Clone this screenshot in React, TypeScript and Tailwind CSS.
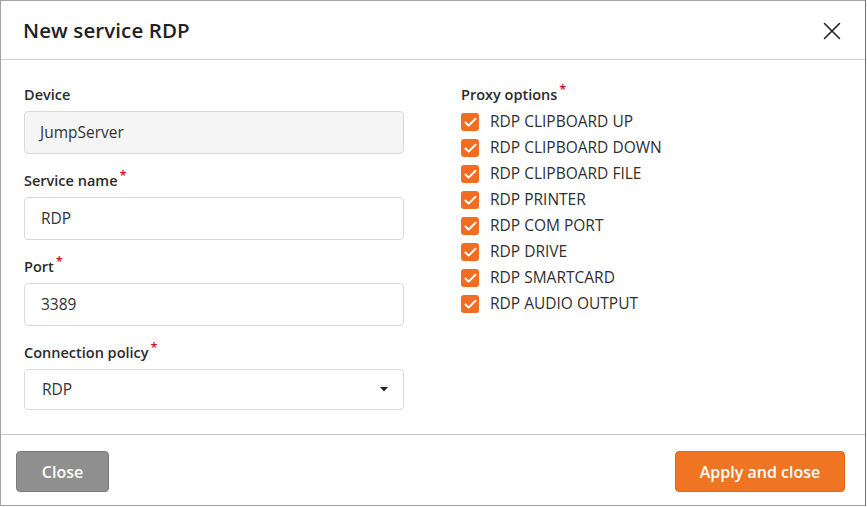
import { Check } from 'lucide-react';

const proxyOptions = [
  'RDP CLIPBOARD UP',
  'RDP CLIPBOARD DOWN',
  'RDP CLIPBOARD FILE',
  'RDP PRINTER',
  'RDP COM PORT',
  'RDP DRIVE',
  'RDP SMARTCARD',
  'RDP AUDIO OUTPUT',
];

function Label({ text, required }: { text: string; required?: boolean }) {
  return (
    <div className="h-[20px] leading-[20px] text-[14.5px] font-semibold text-[#2b2b2b]">
      {text}
      {required && <sup className="ml-[2px] text-[13px] text-[#d0101b] font-semibold">*</sup>}
    </div>
  );
}

export default function App() {
  return (
    <div className="w-[867px] h-[507px] bg-white" style={{ fontFamily: '"Open Sans", "Liberation Sans", sans-serif' }}>
      <div className="w-[866px] h-[506px] flex flex-col border border-[#a3a3a3] border-r-[#6f6f6f] bg-white">
        {/* Header */}
        <div className="h-[59px] shrink-0 flex items-center justify-between pl-[22px] pr-[24px] border-b border-[#cdcdcd]">
          <h2 className="text-[20.5px] font-semibold text-[#222] tracking-[0.1px]">New service RDP</h2>
          <svg width="18" height="18" viewBox="0 0 18 18" className="mt-[1px]">
            <path d="M1.5 1.5 L16.5 16.5 M16.5 1.5 L1.5 16.5" stroke="#222" strokeWidth="1.6" strokeLinecap="round" />
          </svg>
        </div>

        {/* Body */}
        <div className="flex-1 flex pt-[25px] pl-[23px]">
          <div className="w-[380px] flex flex-col">
            <Label text="Device" />
            <div className="mt-[6px] h-[43px] flex items-center px-[15px] rounded-[4px] border border-[#dadada] bg-[#f5f5f5] text-[15.5px] text-[#333]">
              JumpServer
            </div>

            <div className="mt-[17px]">
              <Label text="Service name" required />
            </div>
            <div className="mt-[6px] h-[43px] flex items-center px-[16px] rounded-[4px] border border-[#dadada] bg-white text-[15.5px] text-[#333]">
              RDP
            </div>

            <div className="mt-[17px]">
              <Label text="Port" required />
            </div>
            <div className="mt-[6px] h-[43px] flex items-center px-[16px] rounded-[4px] border border-[#dadada] bg-white text-[15.5px] text-[#333]">
              3389
            </div>

            <div className="mt-[17px]">
              <Label text="Connection policy" required />
            </div>
            <div className="mt-[6px] h-[41px] flex items-center justify-between pl-[17px] pr-[15px] rounded-[4px] border border-[#dadada] bg-white text-[15.5px] text-[#333]">
              <span>RDP</span>
              <svg width="8" height="5" viewBox="0 0 8 5">
                <path d="M0 0 L8 0 L4 4.5 Z" fill="#222" />
              </svg>
            </div>
          </div>

          <div className="ml-[57px] flex flex-col">
            <Label text="Proxy options" required />
            <div className="mt-[4px] flex flex-col">
              {proxyOptions.map((opt) => (
                <div key={opt} className="h-[26px] flex items-center">
                  <span className="w-[18px] h-[18px] rounded-[3px] bg-[#f26d1f] flex items-center justify-center">
                    <Check size={15} strokeWidth={3.2} color="#fff" />
                  </span>
                  <span className="ml-[11px] text-[15.5px] text-[#2f2f2f]">{opt}</span>
                </div>
              ))}
            </div>
          </div>
        </div>

        {/* Footer */}
        <div className="h-[71px] shrink-0 border-t border-[#c8c8c8] flex items-center justify-between pl-[15px] pr-[20px] pt-[3px]">
          <button className="w-[93px] h-[41px] rounded-[4px] bg-[#8f8f8f] border border-[#7c7c7c] text-white text-[16px] font-semibold">
            Close
          </button>
          <button className="w-[170px] h-[41px] rounded-[4px] bg-[#f07522] border border-[#e06816] text-white text-[16px] font-semibold">
            Apply and close
          </button>
        </div>
      </div>
    </div>
  );
}
